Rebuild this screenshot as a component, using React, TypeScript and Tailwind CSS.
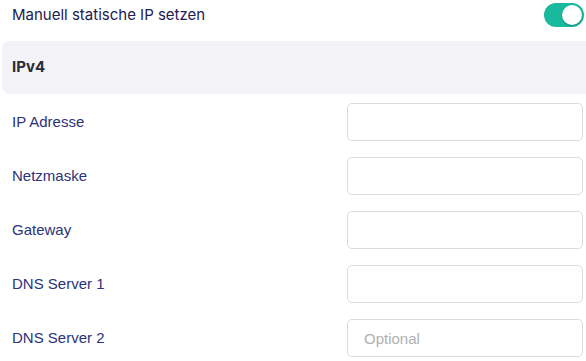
import { useState } from "react";

const fields = [
  { label: "IP Adresse", placeholder: "" },
  { label: "Netzmaske", placeholder: "" },
  { label: "Gateway", placeholder: "" },
  { label: "DNS Server 1", placeholder: "" },
  { label: "DNS Server 2", placeholder: "Optional" },
];

function Toggle({ on, onChange }: { on: boolean; onChange: (v: boolean) => void }) {
  return (
    <button
      type="button"
      onClick={() => onChange(!on)}
      className={`flex h-[24px] w-[40px] items-center rounded-full p-[2px] ${
        on ? "justify-end bg-[#19b99e]" : "justify-start bg-[#d9d9de]"
      }`}
    >
      <span className="h-[20px] w-[20px] rounded-full bg-white shadow-[0_1px_2px_rgba(0,0,0,0.25)]" />
    </button>
  );
}

export default function App() {
  const [manual, setManual] = useState(true);

  return (
    <div className="w-[586px] h-[361px] overflow-hidden bg-white">
      <div className="flex h-[29px] items-center justify-between pl-3 pr-[2px] pt-[1px]">
        <span className="font-['Inter',sans-serif] text-[15px] text-[#1d2050]">
          Manuell statische IP setzen
        </span>
        <Toggle on={manual} onChange={setManual} />
      </div>

      <div className="ml-[2px] mt-[12px] flex h-[53px] items-center rounded-l-lg bg-[#f2f2f7] pl-[10px]">
        <span className="font-['Inter',sans-serif] text-[15px] font-bold text-[#2a2a35]">IPv4</span>
      </div>

      <div className="flex flex-col gap-[16px] pl-3 pr-[3px] pt-[9px]">
        {fields.map((f) => (
          <div key={f.label} className="flex h-[38px] items-center justify-between">
            <label className="font-['Liberation_Sans',Arial,sans-serif] text-[15px] text-[#2c3278]">
              {f.label}
            </label>
            <input
              placeholder={f.placeholder}
              className="h-[38px] w-[236px] rounded-[5px] border border-[#dcdcdc] bg-white px-[16px] font-['Liberation_Sans',Arial,sans-serif] text-[15px] text-[#333] outline-none placeholder:text-[#b0b0b0]"
            />
          </div>
        ))}
      </div>
    </div>
  );
}
